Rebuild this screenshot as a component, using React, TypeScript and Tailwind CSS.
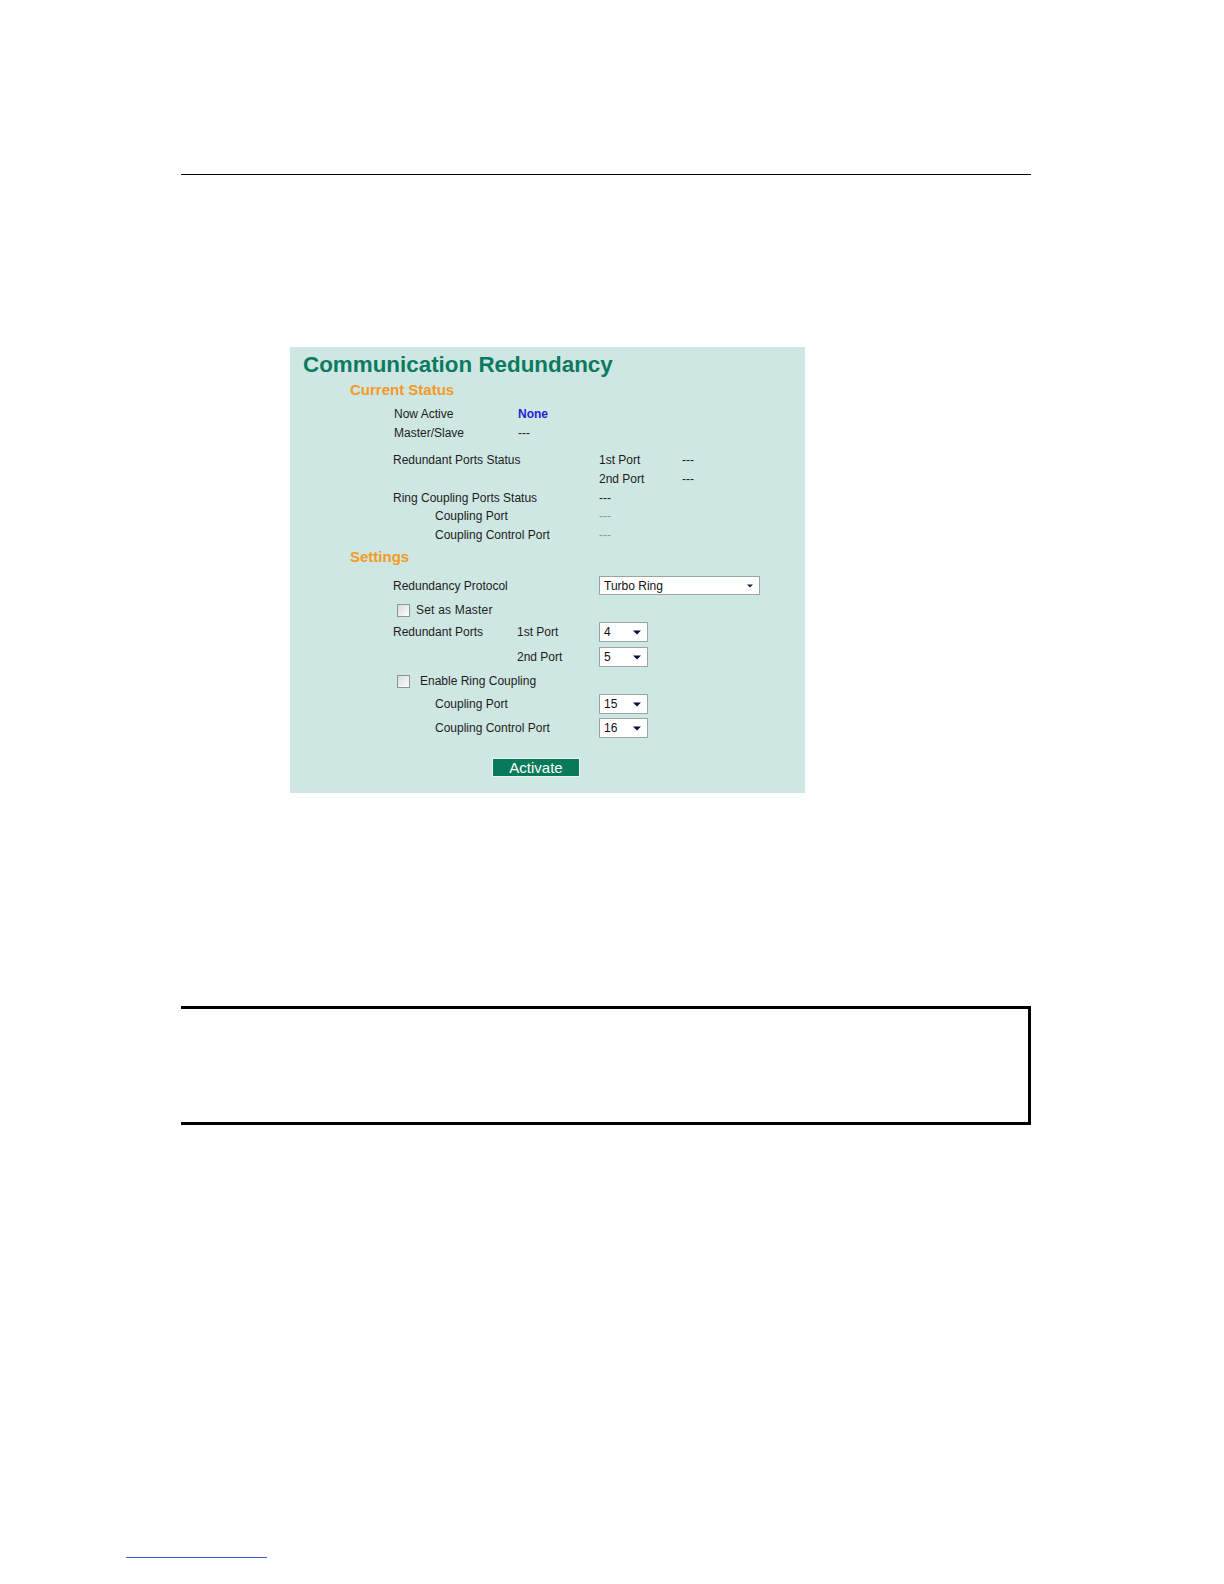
import React from "react";

const F = { fontFamily: '"Liberation Sans", Arial, sans-serif' };

function Arrow({ small }: { small?: boolean }) {
  return small ? (
    <svg width="6" height="4" viewBox="0 0 6 4" className="block">
      <path d="M0 0.5 L6 0.5 L3 3.5 Z" fill="#1a1a40" />
    </svg>
  ) : (
    <svg width="8" height="5" viewBox="0 0 8 5" className="block">
      <path d="M0 0.5 L8 0.5 L4 4.5 Z" fill="#0c0c40" />
    </svg>
  );
}

function Select({ value, wide, h = 20 }: { value: string; wide?: boolean; h?: number }) {
  return (
    <div
      className={`flex items-center justify-between bg-white border border-[#9aa6a6] text-[12px] text-[#111] pl-[4px] ${wide ? "w-[161px] pr-[6px]" : "w-[49px] pr-[6px]"}`}
      style={{ height: h }}
    >
      <span>{value}</span>
      <Arrow small={wide} />
    </div>
  );
}

function Checkbox() {
  return (
    <div className="w-[13px] h-[13px] border border-[#8d9494] bg-gradient-to-br from-[#d8dcdc] to-[#ffffff]" />
  );
}

export default function App() {
  return (
    <div className="w-[1224px] h-[1584px] bg-white relative overflow-hidden" style={F}>
      <div className="pt-[174px]">
        <div className="ml-[181px] w-[850px] h-[1px] bg-black" />
      </div>

      {/* Panel */}
      <div className="ml-[290px] mt-[172px] w-[515px] h-[446px] bg-[#cfe7e3] text-[12px] text-[#1c1c1c] flex flex-col">
        <div className="mt-[5px] h-[26px] leading-[26px] pl-[13px] text-[22.4px] font-bold text-[#0b7a60]">
          Communication Redundancy
        </div>
        <div className="mt-[2px] h-[20px] leading-[20px] pl-[60px] text-[15px] font-bold text-[#f39a22]">
          Current Status
        </div>

        <div className="mt-[4px] h-[19px] flex items-center pl-[104px]">
          <span className="w-[124px]">Now Active</span>
          <span className="font-bold text-[#2323cf]">None</span>
        </div>
        <div className="h-[19px] flex items-center pl-[104px]">
          <span className="w-[124px]">Master/Slave</span>
          <span>---</span>
        </div>

        <div className="mt-[8px] h-[19px] flex items-center pl-[103px]">
          <span className="w-[206px]">Redundant Ports Status</span>
          <span className="w-[83px]">1st Port</span>
          <span>---</span>
        </div>
        <div className="h-[19px] flex items-center pl-[309px]">
          <span className="w-[83px]">2nd Port</span>
          <span>---</span>
        </div>
        <div className="h-[19px] flex items-center pl-[103px]">
          <span className="w-[206px]">Ring Coupling Ports Status</span>
          <span>---</span>
        </div>
        <div className="h-[18px] flex items-center pl-[145px]">
          <span className="w-[164px]">Coupling Port</span>
          <span className="text-[#8a9a98]">---</span>
        </div>
        <div className="h-[19px] flex items-center pl-[145px]">
          <span className="w-[164px]">Coupling Control Port</span>
          <span className="text-[#8a9a98]">---</span>
        </div>

        <div className="mt-[3px] h-[20px] leading-[20px] pl-[60px] text-[15px] font-bold text-[#f39a22]">
          Settings
        </div>

        <div className="mt-[9px] h-[19px] flex items-center pl-[103px]">
          <span className="w-[206px]">Redundancy Protocol</span>
          <Select value="Turbo Ring" wide h={19} />
        </div>
        <div className="mt-[6px] h-[18px] flex items-center pl-[107px]">
          <Checkbox />
          <span className="ml-[6px] tracking-[0.2px]">Set as Master</span>
        </div>
        <div className="mt-[3px] h-[20px] flex items-center pl-[103px]">
          <span className="w-[124px]">Redundant Ports</span>
          <span className="w-[82px]">1st Port</span>
          <Select value="4" />
        </div>
        <div className="mt-[5px] h-[20px] flex items-center pl-[227px]">
          <span className="w-[82px]">2nd Port</span>
          <Select value="5" />
        </div>
        <div className="mt-[5px] h-[18px] flex items-center pl-[107px]">
          <Checkbox />
          <span className="ml-[10px]">Enable Ring Coupling</span>
        </div>
        <div className="mt-[4px] h-[20px] flex items-center pl-[145px]">
          <span className="w-[164px]">Coupling Port</span>
          <Select value="15" />
        </div>
        <div className="mt-[4px] h-[20px] flex items-center pl-[145px]">
          <span className="w-[164px]">Coupling Control Port</span>
          <Select value="16" />
        </div>

        <div className="mt-[20px] flex pl-[202px]">
          <button className="w-[88px] h-[19px] bg-[#087a59] border border-[#e8f4f1] text-white text-[15px] leading-[17px] flex items-center justify-center">
            Activate
          </button>
        </div>
      </div>

      {/* Bottom note box */}
      <div className="ml-[181px] mt-[213px] w-[850px] h-[119px] border-t-[3px] border-r-[3px] border-b-[3px] border-black" />

      {/* footer link line */}
      <div className="ml-[126px] mt-[432px] w-[141px] h-[1px] bg-[#3b5bdb]" />
    </div>
  );
}
